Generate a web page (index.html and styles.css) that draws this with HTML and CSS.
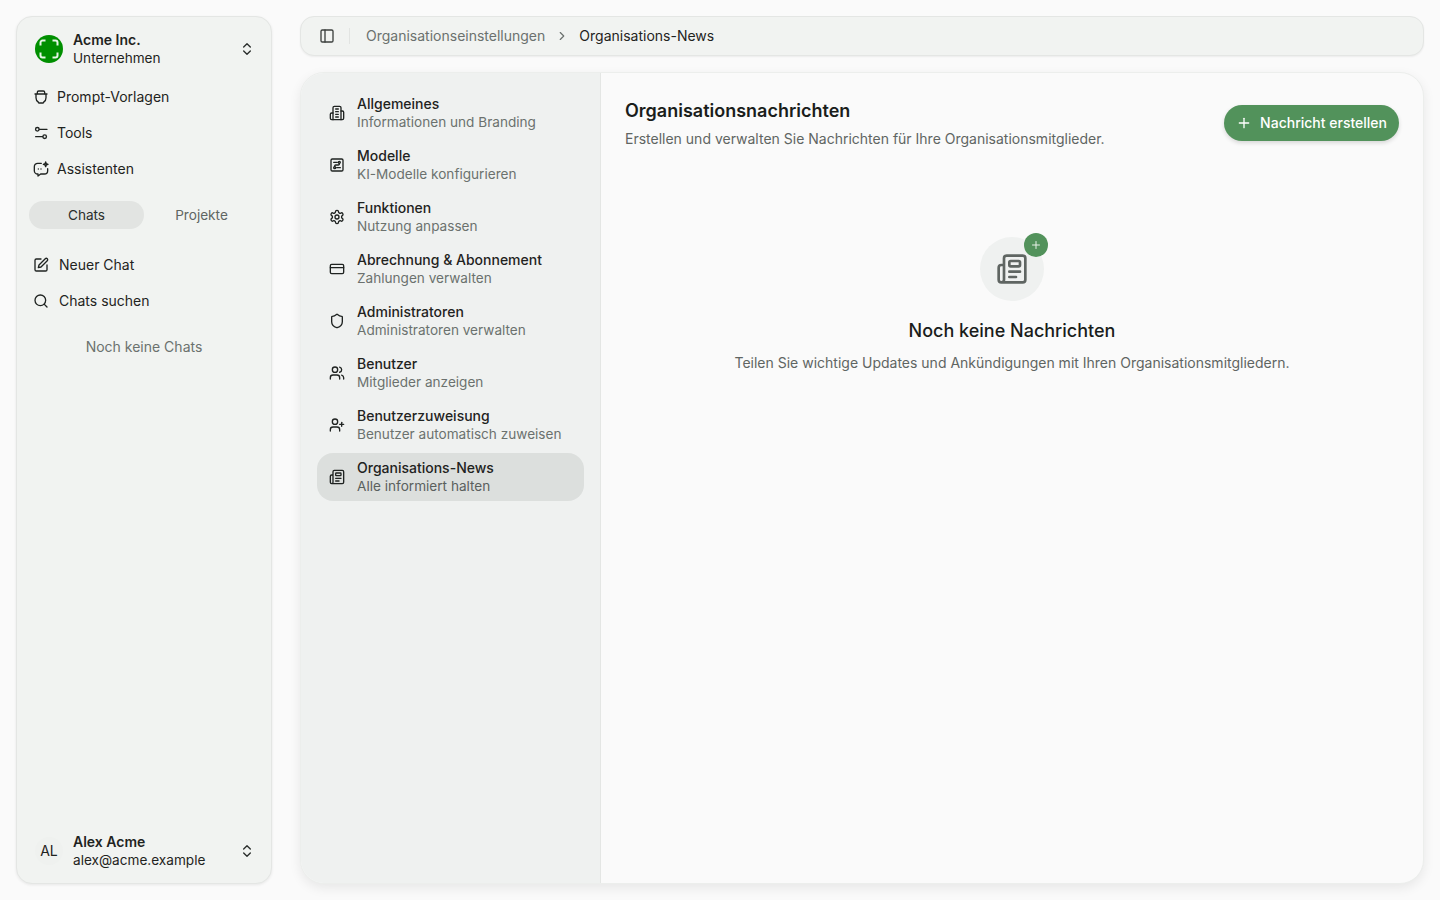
FILE: index.html
```html
<!DOCTYPE html>
<html lang="de">
<head>
<meta charset="utf-8">
<title>Organisations-News</title>
<link rel="stylesheet" href="styles.css">
</head>
<body>
<svg class="defs" width="0" height="0" aria-hidden="true">
  <symbol id="updown" viewBox="0 0 24 24"><path d="m7 15 5 5 5-5"/><path d="m7 9 5-5 5 5"/></symbol>
  <symbol id="news" viewBox="0 0 24 24"><path d="M15 18h-5"/><path d="M18 14h-8"/><path d="M4 22h16a2 2 0 0 0 2-2V4a2 2 0 0 0-2-2H8a2 2 0 0 0-2 2v16a2 2 0 0 1-4 0v-9a2 2 0 0 1 2-2h2"/><rect x="10" y="6" width="8" height="4" rx="1"/></symbol>
</svg>
<div class="app">
  <aside class="sidebar">
    <div class="account">
      <span class="logo"><svg viewBox="0 0 24 24"><path d="M3.500 8.500V5.500a2 2 0 0 1 2-2h3"/><path d="M15.500 3.500h3a2 2 0 0 1 2 2v3"/><path d="M20.500 15.500v3a2 2 0 0 1-2 2h-3"/><path d="M8.500 20.500h-3a2 2 0 0 1-2-2v-3"/></svg></span>
      <span class="account-text"><b>Acme Inc.</b><span>Unternehmen</span></span>
      <svg class="icon updown"><use href="#updown"/></svg>
    </div>
    <nav class="tools">
      <a class="tool"><svg class="icon" viewBox="0 0 24 24"><path d="M6.500 7V5a2 2 0 0 1 2-2h7a2 2 0 0 1 2 2v2"/><path d="M3 7.500h18"/><path d="M4.500 8v5a8 8 0 0 0 3.500 6.700V20a1 1 0 0 0 1 1h6a1 1 0 0 0 1-1v-.3A8 8 0 0 0 19.500 13V8"/></svg>Prompt-Vorlagen</a>
      <a class="tool"><svg class="icon" viewBox="0 0 24 24"><path d="M9.500 6.500H21"/><circle cx="6.500" cy="6.500" r="2.700"/><path d="M4 17.500h10.500"/><circle cx="17.500" cy="17.500" r="2.700"/></svg>Tools</a>
      <a class="tool"><svg class="icon" viewBox="0 0 24 24"><path d="M12.500 3.500H7a5 5 0 0 0-5 5v6a5 5 0 0 0 5 5h.5v3l4-3H17a5 5 0 0 0 5-5v-3"/><path d="M8 12h.01"/><path d="M12 12h.01"/><path d="M19 1.500l.9 2.600 2.600.9-2.600.9-.9 2.600-.9-2.600L15.500 5l2.600-.9z"/></svg>Assistenten</a>
    </nav>
    <div class="tabs"><span class="tab active">Chats</span><span class="tab">Projekte</span></div>
    <nav class="chats">
      <a class="chat"><svg class="icon" viewBox="0 0 24 24"><path d="M12 3H5a2 2 0 0 0-2 2v14a2 2 0 0 0 2 2h14a2 2 0 0 0 2-2v-7"/><path d="M18.400 2.600a2.120 2.120 0 0 1 3 3L12 15l-4 1 1-4z"/></svg>Neuer Chat</a>
      <a class="chat"><svg class="icon" viewBox="0 0 24 24"><circle cx="11" cy="11" r="8"/><path d="m21 21-4.300-4.300"/></svg>Chats suchen</a>
    </nav>
    <p class="no-chats">Noch keine Chats</p>
    <div class="user">
      <span class="initials">AL</span>
      <span class="account-text"><b>Alex Acme</b><span>alex@acme.example</span></span>
      <svg class="icon updown"><use href="#updown"/></svg>
    </div>
  </aside>
  <div class="content">
    <header class="topbar">
      <svg class="icon toggle" viewBox="0 0 24 24"><rect x="3" y="3" width="18" height="18" rx="2"/><path d="M9 3v18"/></svg>
      <span class="divider"></span>
      <span class="crumb">Organisationseinstellungen</span>
      <svg class="icon chevron" viewBox="0 0 24 24"><path d="m9 18 6-6-6-6"/></svg>
      <span class="crumb-current">Organisations-News</span>
    </header>
    <div class="panel">
      <nav class="settings">
        <a class="item"><svg class="icon" viewBox="0 0 24 24"><path d="M6 22V4a2 2 0 0 1 2-2h8a2 2 0 0 1 2 2v18z"/><path d="M6 12H4a2 2 0 0 0-2 2v6a2 2 0 0 0 2 2h2"/><path d="M18 9h2a2 2 0 0 1 2 2v9a2 2 0 0 1-2 2h-2"/><path d="M10 6h4"/><path d="M10 10h4"/><path d="M10 14h4"/><path d="M10 18h4"/></svg><span class="item-text"><b>Allgemeines</b><span>Informationen und Branding</span></span></a>
        <a class="item"><svg class="icon" viewBox="0 0 24 24"><rect x="3" y="3" width="18" height="18" rx="2"/><path d="M7 8h5.500"/><circle cx="15.500" cy="8" r="1.500"/><path d="M17 16h-5.500"/><circle cx="8.500" cy="16" r="1.500"/><path d="M15.500 9.500v1a1.500 1.500 0 0 1-1.500 1.500h-4a1.500 1.500 0 0 0-1.500 1.500v1"/></svg><span class="item-text"><b>Modelle</b><span>KI-Modelle konfigurieren</span></span></a>
        <a class="item"><svg class="icon" viewBox="0 0 24 24"><path d="M12.220 2h-.44a2 2 0 0 0-2 2v.180a2 2 0 0 1-1 1.730l-.43.250a2 2 0 0 1-2 0l-.150-.080a2 2 0 0 0-2.730.730l-.220.380a2 2 0 0 0 .730 2.730l.150.100a2 2 0 0 1 1 1.720v.510a2 2 0 0 1-1 1.740l-.150.090a2 2 0 0 0-.730 2.730l.220.380a2 2 0 0 0 2.730.730l.150-.080a2 2 0 0 1 2 0l.430.250a2 2 0 0 1 1 1.730V20a2 2 0 0 0 2 2h.44a2 2 0 0 0 2-2v-.180a2 2 0 0 1 1-1.730l.430-.250a2 2 0 0 1 2 0l.150.080a2 2 0 0 0 2.730-.730l.220-.390a2 2 0 0 0-.730-2.730l-.150-.080a2 2 0 0 1-1-1.740v-.500a2 2 0 0 1 1-1.740l.150-.090a2 2 0 0 0 .730-2.730l-.220-.380a2 2 0 0 0-2.730-.730l-.150.080a2 2 0 0 1-2 0l-.430-.250a2 2 0 0 1-1-1.730V4a2 2 0 0 0-2-2z"/><circle cx="12" cy="12" r="3"/></svg><span class="item-text"><b>Funktionen</b><span>Nutzung anpassen</span></span></a>
        <a class="item"><svg class="icon" viewBox="0 0 24 24"><rect x="2" y="5" width="20" height="14" rx="2"/><path d="M2 10h20"/></svg><span class="item-text"><b>Abrechnung &amp; Abonnement</b><span>Zahlungen verwalten</span></span></a>
        <a class="item"><svg class="icon" viewBox="0 0 24 24"><path d="M20 13c0 5-3.500 7.500-7.660 8.950a1 1 0 0 1-.67-.010C7.500 20.500 4 18 4 13V6a1 1 0 0 1 1-1c2 0 4.500-1.200 6.240-2.720a1.170 1.170 0 0 1 1.520 0C14.510 3.810 17 5 19 5a1 1 0 0 1 1 1z"/></svg><span class="item-text"><b>Administratoren</b><span>Administratoren verwalten</span></span></a>
        <a class="item"><svg class="icon" viewBox="0 0 24 24"><path d="M16 21v-2a4 4 0 0 0-4-4H6a4 4 0 0 0-4 4v2"/><circle cx="9" cy="7" r="4"/><path d="M22 21v-2a4 4 0 0 0-3-3.870"/><path d="M16 3.130a4 4 0 0 1 0 7.750"/></svg><span class="item-text"><b>Benutzer</b><span>Mitglieder anzeigen</span></span></a>
        <a class="item"><svg class="icon" viewBox="0 0 24 24"><path d="M16 21v-2a4 4 0 0 0-4-4H6a4 4 0 0 0-4 4v2"/><circle cx="9" cy="7" r="4"/><path d="M19 8v6"/><path d="M22 11h-6"/></svg><span class="item-text"><b>Benutzerzuweisung</b><span>Benutzer automatisch zuweisen</span></span></a>
        <a class="item selected"><svg class="icon"><use href="#news"/></svg><span class="item-text"><b>Organisations-News</b><span>Alle informiert halten</span></span></a>
      </nav>
      <main class="main">
        <div class="main-head">
          <div class="heading">
            <h1>Organisationsnachrichten</h1>
            <p>Erstellen und verwalten Sie Nachrichten für Ihre Organisationsmitglieder.</p>
          </div>
          <button class="create"><svg class="icon" viewBox="0 0 24 24"><path d="M5 12h14"/><path d="M12 5v14"/></svg>Nachricht erstellen</button>
        </div>
        <div class="empty">
          <div class="empty-icon">
            <svg class="icon"><use href="#news"/></svg>
            <span class="badge"><svg class="icon" viewBox="0 0 24 24"><path d="M5 12h14"/><path d="M12 5v14"/></svg></span>
          </div>
          <h2>Noch keine Nachrichten</h2>
          <p>Teilen Sie wichtige Updates und Ankündigungen mit Ihren Organisationsmitgliedern.</p>
        </div>
      </main>
    </div>
  </div>
</div>
</body>
</html>
```
FILE: styles.css
```css
* { box-sizing: border-box; }
html, body { margin: 0; height: 100%; }
body {
  background: #fafafa;
  color: #1f2321;
  font-family: Inter, "Liberation Sans", sans-serif;
  font-size: 14px;
  line-height: 18px;
  overflow: hidden;
}
.defs { position: absolute; }
.icon {
  width: 16px;
  height: 16px;
  flex: none;
  fill: none;
  stroke: currentColor;
  stroke-width: 2;
  stroke-linecap: round;
  stroke-linejoin: round;
}
.app { display: flex; gap: 28px; height: 900px; padding: 16px; }

.sidebar {
  width: 256px;
  flex: none;
  display: flex;
  flex-direction: column;
  background: #f1f3f1;
  border: 1px solid #e4e6e4;
  border-radius: 16px;
  box-shadow: 0 1px 3px rgba(0, 0, 0, .08);
  padding: 14px 12px;
}
.account, .user { display: flex; align-items: center; height: 36px; padding-left: 6px; }
.logo {
  width: 28px;
  height: 28px;
  flex: none;
  border-radius: 50%;
  background: #008f00;
  display: flex;
  align-items: center;
  justify-content: center;
}
.logo svg { width: 24px; height: 24px; fill: none; stroke: #e6f5e6; stroke-width: 2; stroke-linecap: butt; }
.account-text { display: flex; flex-direction: column; margin-left: 10px; flex: 1; min-width: 0; }
.account-text b { font-weight: 600; }
.account-text span { font-size: 13.6px; }
.updown { color: #2a2e2c; margin-right: 4px; }
.tools { display: flex; flex-direction: column; margin-top: 12px; }
.tool, .chat { display: flex; align-items: center; height: 36px; padding-left: 4px; }
.tool .icon { margin-right: 8px; }
.chat .icon { margin-right: 10px; }
.tabs { display: flex; margin-top: 14px; }
.tab { width: 115px; height: 28px; display: flex; align-items: center; justify-content: center; color: #5f6562; border-radius: 14px; font-size: 13.6px; }
.tab.active { background: #e2e4e2; color: #2a2e2c; }
.chats { display: flex; flex-direction: column; margin-top: 18px; }
.no-chats { margin: 19px 0 0; text-align: center; color: #6b716e; flex: 1; }
.initials {
  width: 28px;
  height: 28px;
  flex: none;
  border-radius: 50%;
  background: #eff1ef;
  display: flex;
  align-items: center;
  justify-content: center;
}

.content { flex: 1; display: flex; flex-direction: column; gap: 16px; min-width: 0; }
.topbar {
  height: 40px;
  flex: none;
  display: flex;
  align-items: center;
  background: #f1f3f1;
  border: 1px solid #e4e6e4;
  border-radius: 14px;
  box-shadow: 0 1px 2px rgba(0, 0, 0, .06);
  padding-left: 18px;
}
.toggle { color: #3c403e; }
.divider { width: 1px; height: 16px; background: #e2e4e2; margin: 0 16px 0 14px; }
.crumb { color: #6b716e; }
.chevron { width: 14px; height: 14px; color: #6b716e; margin: 0 10px; }
.panel {
  flex: 1;
  display: flex;
  background: #fafafa;
  border: 1px solid #eceeec;
  border-radius: 24px;
  box-shadow: 0 4px 12px rgba(0, 0, 0, .08);
  overflow: hidden;
  min-height: 0;
}
.settings {
  width: 300px;
  flex: none;
  display: flex;
  flex-direction: column;
  gap: 4px;
  background: #eff1f0;
  border-right: 1px solid #e4e6e4;
  padding: 16px;
}
.item { display: flex; align-items: center; height: 48px; padding-left: 12px; border-radius: 16px; }
.item .icon { margin-right: 12px; }
.item-text { display: flex; flex-direction: column; line-height: 19px; }
.item-text b { font-weight: 500; }
.item-text span { color: #6b716e; font-size: 13.6px; }
.selected { background: #dcdfdd; }
.selected .item-text span { color: #5a605d; }

.main { flex: 1; min-width: 0; padding: 24px; }
.main-head { display: flex; justify-content: space-between; align-items: center; }
.heading { min-width: 0; }
h1 { margin: 0; font-size: 18px; line-height: 28px; font-weight: 600; color: #1a1d1b; }
.heading p { margin: 4px 0 0; color: #5f6562; line-height: 20px; }
.create {
  height: 36px;
  display: flex;
  align-items: center;
  gap: 8px;
  padding: 0 12px;
  border: 0;
  border-radius: 18px;
  background: #52925b;
  color: #fff;
  font: 500 14px/18px Inter, "Liberation Sans", sans-serif;
  box-shadow: 0 2px 4px rgba(0, 0, 0, .14);
}
.empty { display: flex; flex-direction: column; align-items: center; padding-top: 88px; }
.empty-icon {
  position: relative;
  width: 64px;
  height: 64px;
  border-radius: 50%;
  background: #eff1f0;
  display: flex;
  align-items: center;
  justify-content: center;
  color: #5f6562;
}
.empty-icon > .icon { width: 32px; height: 32px; stroke-width: 2; }
.badge {
  position: absolute;
  top: -4px;
  right: -4px;
  width: 24px;
  height: 24px;
  border-radius: 50%;
  background: #52925b;
  color: #e8f2e9;
  display: flex;
  align-items: center;
  justify-content: center;
}
.badge .icon { width: 12px; height: 12px; }
h2 { margin: 16px 0 0; font-size: 18px; line-height: 28px; font-weight: 500; color: #1a1d1b; }
.empty p { margin: 8px 0 0; color: #5f6562; line-height: 20px; }
```
